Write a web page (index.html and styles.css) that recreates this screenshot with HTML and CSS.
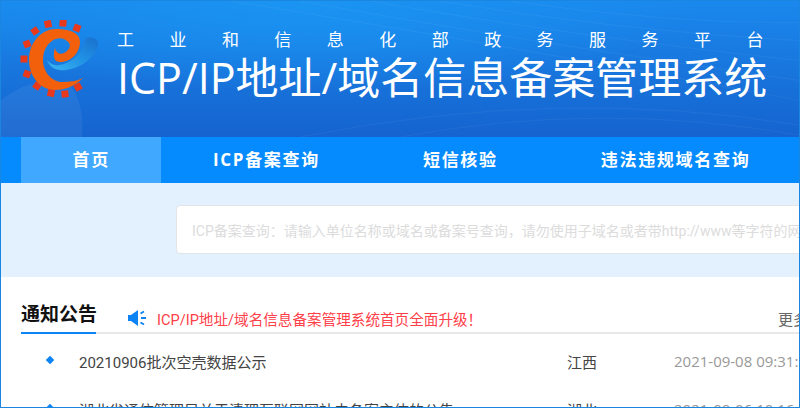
FILE: index.html
```html
<!DOCTYPE html>
<html lang="zh-CN">

<head>
    <meta charset="UTF-8">
    <title>ICP/IP地址/域名信息备案管理系统</title>
    <link rel="stylesheet" href="styles.css">
</head>

<body>
    <div class="frame">
        <header class="banner">
            <svg class="bannerArt" viewBox="0 0 800 137" preserveAspectRatio="none">
                <path d="M0 137V100Q35 72 70 86Q84 105 81 137Z" fill="#fff" opacity="0.06" />
                <path d="M230 0Q480 40 800 100M300 0Q520 40 800 80M370 0Q570 35 800 60M440 0Q620 30 800 40M510 0Q660 22 800 22M300 137Q560 85 800 125M400 137Q600 100 800 135" fill="none" stroke="#fff" opacity="0.05" />
            </svg>
            <svg class="logo" viewBox="20 20 80 78">
                <defs>
                    <linearGradient id="swoosh" x1="0" y1="1" x2="1" y2="0">
                        <stop offset="0" stop-color="#38b6f2" />
                        <stop offset="0.55" stop-color="#1f8fe4" />
                        <stop offset="1" stop-color="#1a6fcc" />
                    </linearGradient>
                </defs>
                <g fill="#e8391d">
                    <rect x="-3.5" y="-3.5" width="7" height="7" transform="translate(48 24) rotate(-12)" />
                    <rect x="-3.5" y="-3.5" width="7" height="7" transform="translate(63 23) rotate(5)" />
                    <rect x="-3.5" y="-3.5" width="7" height="7" transform="translate(77 28) rotate(22)" />
                    <rect x="-3.5" y="-3.5" width="7" height="7" transform="translate(35 31) rotate(-35)" />
                    <rect x="-3.5" y="-3.5" width="7" height="7" transform="translate(27 44) rotate(-22)" />
                    <rect x="-3.5" y="-3.5" width="7" height="7" transform="translate(24 59) rotate(0)" />
                    <rect x="-3.5" y="-3.5" width="7" height="7" transform="translate(27 74) rotate(20)" />
                    <rect x="-3.5" y="-3.5" width="7" height="7" transform="translate(37 86) rotate(35)" />
                    <rect x="-3.5" y="-3.5" width="7" height="7" transform="translate(51 93) rotate(12)" />
                    <rect x="-3.5" y="-3.5" width="7" height="7" transform="translate(65 94) rotate(-6)" />
                    <rect x="-3.5" y="-3.5" width="7" height="7" transform="translate(78 87) rotate(-30)" />
                </g>
                <path d="M86 38C94 36 99 40 98 46C96 56 82 68 66 70C56 71 50 68 47 60C52 66 58 66 64 64C76 60 82 50 86 38Z" fill="url(#swoosh)" />
                <path d="M83 78C74 87 64 90 55 90C40 90 29 76 29 60C29 42 42 29 56 29C68 29 80 32 80 42C80 52 72 62 60 62C55 62 52 58 55 48C56 53 60 55 64 53C70 50 72 44 67 41C62 37 56 38 52 41C46 45 43 52 43 60C43 72 52 82 62 82C70 82 77 81 83 78Z" fill="#f2600c" />
            </svg>
            <div class="bannerText">
                <div class="bannerSub">工业和信息化部政务服务平台</div>
                <h1 class="bannerTitle">ICP/IP地址/域名信息备案管理系统</h1>
            </div>
        </header>

        <nav class="nav">
            <a class="navItem navActive">首页</a>
            <a class="navItem">ICP备案查询</a>
            <a class="navItem">短信核验</a>
            <a class="navItem">违法违规域名查询</a>
        </nav>

        <section class="searchBand">
            <div class="searchBox">ICP备案查询：请输入单位名称或域名或备案号查询，请勿使用子域名或者带http://www等字符的网址查询</div>
        </section>

        <section class="notice">
            <div class="noticeHead">
                <h2 class="noticeTitle">通知公告</h2>
                <svg class="speaker" viewBox="0 0 18 16">
                    <path d="M0 5H3L10 0V16L3 11H0Z" fill="#0d84f5" />
                    <path d="M12.5 3.5L16 1.5M13 8H18M12.5 12.5L16 14.5" stroke="#0d84f5" stroke-width="2" fill="none" />
                </svg>
                <span class="noticeAlert">ICP/IP地址/域名信息备案管理系统首页全面升级！</span>
                <span class="noticeMore">更多</span>
            </div>
            <div class="noticeRow">
                <i class="rowDot"></i>
                <span class="rowName">20210906批次空壳数据公示</span>
                <span class="rowArea">江西</span>
                <span class="rowDate">2021-09-08 09:31:20</span>
            </div>
            <div class="noticeRow">
                <i class="rowDot"></i>
                <span class="rowName">湖北省通信管理局关于清理互联网网站未备案主体的公告</span>
                <span class="rowArea">湖北</span>
                <span class="rowDate">2021-09-06 10:16:42</span>
            </div>
        </section>
    </div>
</body>

</html>
```

FILE: styles.css
```css
html,
body {
    margin: 0;
    height: 408px;
    overflow: hidden;
    background-color: #fff;
}

body {
    font-family: Roboto, "Noto Sans CJK SC", sans-serif;
}

.frame {
    width: 800px;
    height: 408px;
    box-sizing: border-box;
    border: 1px solid #1b86e0;
    overflow: hidden;
}

/* banner */
.banner {
    position: relative;
    display: flex;
    height: 136px;
    margin-right: -40px;
    background:
        radial-gradient(ellipse 400px 90px at 300px 0, #1a94f2, rgba(26, 148, 242, 0)),
        linear-gradient(180deg, #1a88ee 0%, #1876dd 50%, #1563cf 100%);
}

.bannerArt {
    position: absolute;
    left: 0;
    top: 0;
    width: 798px;
    height: 136px;
}

.logo {
    position: relative;
    width: 80px;
    height: 78px;
    margin: 19px 0 0 19px;
}

.bannerText {
    position: relative;
    margin-left: 17px;
    color: #fff;
}

.bannerSub {
    margin-top: 29px;
    font-size: 17px;
    line-height: 20px;
    letter-spacing: 35.45px;
    white-space: nowrap;
}

.bannerTitle {
    margin: -2px 0 0;
    font-family: "Open Sans", "Noto Sans CJK SC", sans-serif;
    font-size: 43px;
    line-height: 60px;
    font-weight: 400;
    white-space: nowrap;
}

/* nav */
.nav {
    display: flex;
    height: 46px;
    padding-left: 20px;
    background-color: #068bff;
}

.navItem {
    padding: 0 51.5px;
    color: #fff;
    font-family: "Open Sans", "Noto Sans CJK SC", sans-serif;
    font-size: 17px;
    font-weight: 700;
    line-height: 46px;
    letter-spacing: 1.7px;
    white-space: nowrap;
}

.navActive {
    background-color: #40a8ff;
}

/* search */
.searchBand {
    display: flex;
    height: 94px;
    padding: 22px 0 0 175px;
    box-sizing: border-box;
    background-color: #e3f1fe;
}

.searchBox {
    flex: none;
    width: 760px;
    height: 49px;
    box-sizing: border-box;
    padding-left: 15px;
    background-color: #fff;
    border: 1px solid #e2e4e8;
    border-radius: 4px;
    color: #dcdcdc;
    font-size: 14px;
    line-height: 50px;
    white-space: nowrap;
}

/* notice */
.notice {
    width: 900px;
    padding-left: 20px;
}

.noticeHead {
    display: flex;
    align-items: center;
    height: 57px;
    width: 880px;
    box-sizing: border-box;
    margin-bottom: 3px;
    padding-right: 93px;
    border-bottom: 2px solid #e8e8e8;
}

.noticeTitle {
    width: 75px;
    height: 57px;
    margin: 0 32px -2px 0;
    box-sizing: border-box;
    padding-top: 25px;
    border-bottom: 2px solid #0d84f5;
    color: #111;
    font-size: 19px;
    font-weight: 700;
    line-height: 26px;
    white-space: nowrap;
}

.speaker {
    width: 18px;
    height: 16px;
    margin-top: 27px;
}

.noticeAlert {
    margin: 27px 0 0 11px;
    color: #ff4049;
    font-size: 14.6px;
    white-space: nowrap;
}

.noticeMore {
    margin: 27px 0 0 auto;
    color: #666;
    font-size: 15px;
}

.noticeRow {
    display: flex;
    align-items: center;
    height: 48px;
    color: #444;
    font-size: 15px;
}

.rowDot {
    width: 6px;
    height: 6px;
    margin: -2px 26px 0 26px;
    background-color: #0d84f5;
    transform: rotate(45deg);
}

.rowName {
    width: 488px;
    white-space: nowrap;
}

.rowArea {
    width: 107px;
}

.rowDate {
    color: #999;
    font-family: "Open Sans", "Noto Sans CJK SC", sans-serif;
    white-space: nowrap;
}
```
